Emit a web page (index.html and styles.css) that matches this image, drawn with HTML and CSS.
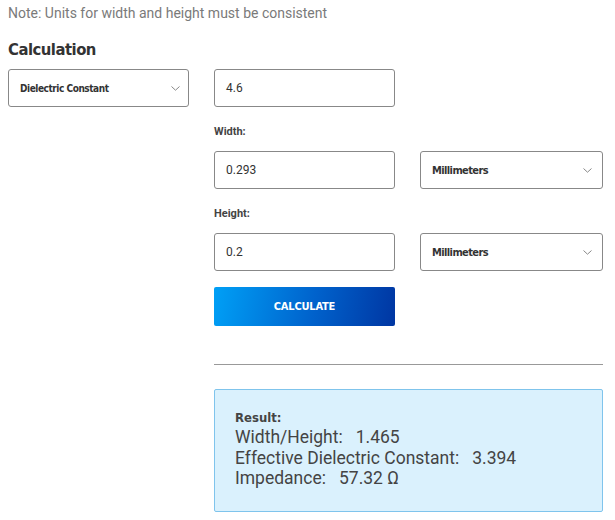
FILE: index.html
```html
<!DOCTYPE html>
<html>
<head>
<meta charset="utf-8">
<link rel="stylesheet" href="styles.css">
</head>
<body>
<div class="page">
  <p class="note">Note: Units for width and height must be consistent</p>
  <h2 class="title">Calculation</h2>
  <div class="layout">
    <div class="left">
      <div class="select">
        <span>Dielectric Constant</span>
        <svg class="chev" width="9" height="5" viewBox="0 0 9 5"><path d="M0.5 0.5 L4.5 4.2 L8.5 0.5" fill="none" stroke="#888" stroke-width="1"/></svg>
      </div>
    </div>
    <div class="right">
      <div class="input">4.6</div>
      <div class="label">Width:</div>
      <div class="row">
        <div class="input">0.293</div>
        <div class="select">
          <span>Millimeters</span>
          <svg class="chev" width="9" height="5" viewBox="0 0 9 5"><path d="M0.5 0.5 L4.5 4.2 L8.5 0.5" fill="none" stroke="#888" stroke-width="1"/></svg>
        </div>
      </div>
      <div class="label">Height:</div>
      <div class="row">
        <div class="input">0.2</div>
        <div class="select">
          <span>Millimeters</span>
          <svg class="chev" width="9" height="5" viewBox="0 0 9 5"><path d="M0.5 0.5 L4.5 4.2 L8.5 0.5" fill="none" stroke="#888" stroke-width="1"/></svg>
        </div>
      </div>
      <button class="btn">CALCULATE</button>
      <hr class="divider">
      <div class="result">
        <div class="result-title">Result:</div>
        <div class="result-line">Width/Height:&nbsp;&nbsp; 1.465</div>
        <div class="result-line">Effective Dielectric Constant:&nbsp;&nbsp; 3.394</div>
        <div class="result-line">Impedance:&nbsp;&nbsp; 57.32 Ω</div>
      </div>
    </div>
  </div>
</div>
</body>
</html>
```
FILE: styles.css
```css
* { box-sizing: border-box; }
html, body { margin: 0; padding: 0; background: #fff; }
body { font-family: Roboto, "Liberation Sans", sans-serif; color: #333; }
.page { padding: 3px 8px 0 8px; }
.note { margin: 0; font-size: 14px; line-height: 20px; color: #7a7a7a; }
.title {
  margin: 16px 0 0 0;
  font-family: "DejaVu Sans Condensed", "DejaVu Sans", sans-serif;
  font-stretch: condensed;
  font-weight: bold;
  font-size: 16.5px;
  line-height: 22px;
  letter-spacing: -0.5px;
  color: #333;
}
.layout { display: flex; gap: 25px; margin-top: 8px; }
.left { width: 181px; }
.right { width: 389px; display: flex; flex-direction: column; }
.row { display: flex; gap: 25px; }
.input, .select {
  width: 181px;
  height: 38px;
  border: 1px solid #888;
  border-radius: 3px;
  display: flex;
  align-items: center;
  padding: 0 10px 0 11px;
  background: #fff;
}
.row .select { width: 183px; }
.input { font-size: 12px; color: #333; }
.select { justify-content: space-between; }
.select span {
  font-family: "DejaVu Sans Condensed", "DejaVu Sans", sans-serif;
  font-stretch: condensed;
  font-weight: bold;
  font-size: 11px;
  letter-spacing: -0.6px;
  color: #333;
}
.left .select span { font-size: 10px; letter-spacing: -0.45px; }
.left .select { padding-right: 8px; }
.label {
  margin: 17px 0 11px 0;
  font-size: 11px;
  line-height: 16px;
  font-weight: bold;
  color: #444;
}
.btn {
  margin-top: 16px;
  width: 181px;
  height: 39px;
  border: none;
  border-radius: 2px;
  background: linear-gradient(100deg, #00a0f6 0%, #0062cc 55%, #0036a2 100%);
  color: #fff;
  font-family: "DejaVu Sans Condensed", "DejaVu Sans", sans-serif;
  font-stretch: condensed;
  font-weight: bold;
  font-size: 11px;
  letter-spacing: -0.2px;
  padding: 0;
}
.divider {
  margin: 38px 0 0 0;
  border: none;
  border-top: 1px solid #999;
  height: 0;
}
.result {
  margin-top: 24px;
  height: 123px;
  background: #daf1fd;
  border: 1px solid #7fc4ec;
  border-radius: 2px;
  padding: 19px 20px 0 20px;
}
.result-title {
  font-family: "DejaVu Sans Condensed", "DejaVu Sans", sans-serif;
  font-stretch: condensed;
  font-weight: bold;
  font-size: 13px;
  line-height: 18px;
  color: #444;
}
.result-line {
  font-size: 17.5px;
  line-height: 20.5px;
  color: #444;
}
```
